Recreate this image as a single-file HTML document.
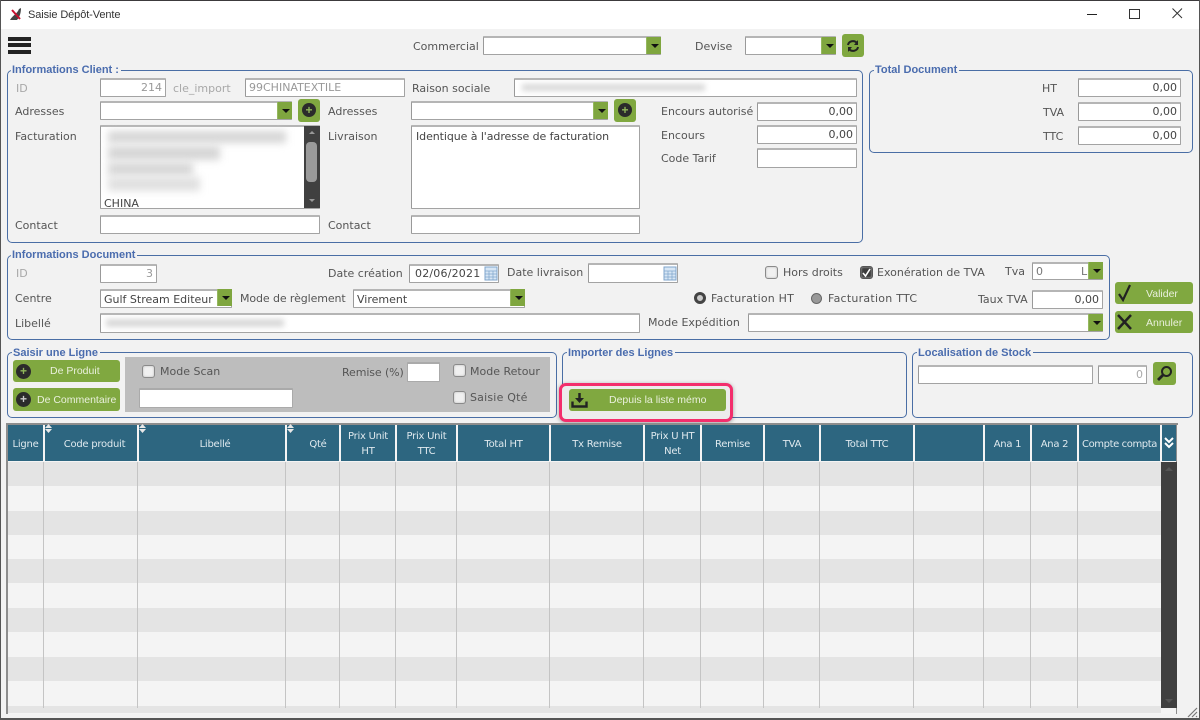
<!DOCTYPE html>
<html><head><meta charset="utf-8"><style>
html,body{margin:0;padding:0;width:1200px;height:720px;overflow:hidden;background:#f2f2f2}
body{position:relative;font-family:"DejaVu Sans","Liberation Sans",sans-serif;font-size:11px;color:#555}
div,svg,span.t{position:absolute;box-sizing:border-box}
.t{white-space:nowrap;line-height:14px;position:absolute}
.l{color:#a8a8a8}
.i{background:#fff;border:1px solid #a3a3a3;border-top:2px solid #b5b5b5;border-left:1px solid #999;border-radius:1px;line-height:16px;padding:0 3px;white-space:nowrap;overflow:hidden;color:#444}
.r{text-align:right;padding-right:3px}
.g{border:1px solid #4a6ea5;border-radius:5px}
.gt{position:absolute;background:#f2f2f2;font-family:"Liberation Sans",sans-serif;font-weight:bold;font-size:11px;color:#4a6cae;line-height:14px;padding:0 2px 0 1px;white-space:nowrap}
.dd{background:#7fa63f;width:15px;border-left:1px solid #95b85f}
.dd:after{content:"";position:absolute;left:4px;top:7px;border:4px solid transparent;border-top:4px solid #111;border-bottom:0}
.b{background:#80a840;border-radius:3px}
.bw{color:#e9f0dc;text-align:center;position:absolute;white-space:nowrap;font-family:"Liberation Sans",sans-serif;font-size:10.5px;line-height:14px}
.c{width:13px;height:13px;background:#f0f0f0;border:1px solid #8a8a8a;border-radius:3px;box-shadow:inset 0 0 2px #bbb}
.h{background:#2d6680;top:425px;height:36px;padding-top:2px;color:#dfe9ee;text-align:center;font-size:10px;letter-spacing:-.25px;line-height:15px;display:flex;align-items:center;justify-content:center}
.sep{top:462px;height:246px;width:1px;background:#c4c4c4}
.rw{left:8px;width:1153px;height:24px;background:#e4e4e4}
.so{width:7px;height:9px;top:424px}
</style></head><body>
<!-- window frame -->
<div style="left:0;top:0;width:1200px;height:1px;background:#3c3a3c"></div>
<div style="left:0;top:1px;width:1200px;height:28px;background:#fff"></div>
<div style="left:0;top:0;width:1px;height:720px;background:#555"></div>
<div style="left:1199px;top:0;width:1px;height:720px;background:#555"></div>
<div style="left:0;top:718px;width:1200px;height:2px;background:#555"></div>
<svg style="left:9px;top:6px" width="14" height="16" viewBox="0 0 14 16"><path d="M1 14 C4 9 8 8 10 3 L12 2 C12 6 11 11 8 14 Z" fill="#444"/><path d="M3 4 L11 13" stroke="#c8102e" stroke-width="2"/></svg>
<span class="t" style="left:28px;top:8px;color:#333;font-family:'Liberation Sans',sans-serif;font-size:11px;letter-spacing:-.1px">Saisie Dépôt-Vente</span>
<div style="left:1087px;top:14px;width:10px;height:1px;background:#222"></div>
<div style="left:1129px;top:9px;width:11px;height:10px;border:1px solid #333"></div>
<svg style="left:1172px;top:8px" width="11" height="11" viewBox="0 0 11 11"><path d="M.5 .5L10 10M10 .5L.5 10" stroke="#333" fill="none"/></svg>

<!-- top bar -->
<div style="left:8px;top:37px;width:23px;height:4px;background:#222"></div>
<div style="left:8px;top:43px;width:23px;height:4px;background:#222"></div>
<div style="left:8px;top:50px;width:23px;height:4px;background:#222"></div>
<span class="t" style="left:413px;top:40px">Commercial</span>
<div class="i" style="left:483px;top:36px;width:178px;height:19px"></div><div class="dd" style="left:646px;top:37px;height:17px"></div>
<span class="t" style="left:695px;top:40px">Devise</span>
<div class="i" style="left:745px;top:36px;width:91px;height:19px"></div><div class="dd" style="left:821px;top:37px;height:17px"></div>
<div class="b" style="left:842px;top:34px;width:22px;height:23px"></div>
<svg style="left:846px;top:39px" width="14" height="14" viewBox="0 0 14 14"><path d="M2 6 A5 4.500 0 0 1 11 4" fill="none" stroke="#222" stroke-width="2"/><path d="M12 1 V6 H8Z" fill="#222"/><path d="M12 8 A5 4.500 0 0 1 3 10" fill="none" stroke="#222" stroke-width="2"/><path d="M2 13 V8 H6Z" fill="#222"/></svg>

<!-- Informations Client -->
<div class="g" style="left:7px;top:70px;width:856px;height:173px"></div>
<span class="gt" style="left:11px;top:63px">Informations Client :</span>
<span class="t l" style="left:16px;top:82px">ID</span>
<div class="i r" style="left:100px;top:78px;width:66px;height:19px;color:#999">214</div>
<span class="t l" style="left:173px;top:82px">cle_import</span>
<div class="i" style="left:245px;top:78px;width:160px;height:19px;color:#999">99CHINATEXTILE</div>
<span class="t" style="left:412px;top:82px">Raison sociale</span>
<div class="i" style="left:514px;top:78px;width:343px;height:19px"></div>
<div style="left:522px;top:84px;width:183px;height:7px;background:#d8d8d8;filter:blur(3px)"></div>

<span class="t" style="left:15px;top:105px">Adresses</span>
<div class="i" style="left:100px;top:101px;width:192px;height:19px"></div><div class="dd" style="left:277px;top:102px;height:17px"></div>
<div class="b" style="left:298px;top:99px;width:22px;height:23px"></div>
<div style="left:302px;top:103px;width:14px;height:14px;border-radius:50%;background:#2b2b2b;color:#8fb75a;font:bold 12px/14px 'Liberation Sans',sans-serif;text-align:center">+</div>
<span class="t" style="left:328px;top:105px">Adresses</span>
<div class="i" style="left:411px;top:101px;width:197px;height:19px"></div><div class="dd" style="left:593px;top:102px;height:17px"></div>
<div class="b" style="left:614px;top:99px;width:22px;height:23px"></div>
<div style="left:618px;top:103px;width:14px;height:14px;border-radius:50%;background:#2b2b2b;color:#8fb75a;font:bold 12px/14px 'Liberation Sans',sans-serif;text-align:center">+</div>

<span class="t" style="left:15px;top:130px">Facturation</span>
<div class="i" style="left:100px;top:125px;width:220px;height:84px"></div>
<div style="left:108px;top:131px;width:178px;height:12px;background:#d6d6d6;filter:blur(4px)"></div>
<div style="left:108px;top:146px;width:112px;height:14px;background:#d6d6d6;filter:blur(4px)"></div>
<div style="left:108px;top:162px;width:85px;height:14px;background:#d8d8d8;filter:blur(4px)"></div>
<div style="left:108px;top:177px;width:92px;height:14px;background:#e0e0e0;filter:blur(4px)"></div>
<span class="t" style="left:104px;top:197px;color:#444;font-size:11px">CHINA</span>
<div style="left:304px;top:126px;width:16px;height:82px;background:#404040"></div>
<div style="left:306px;top:142px;width:11px;height:40px;background:#9a9a9a;border-radius:4px"></div>
<div style="left:309px;top:131px;border:3px solid transparent;border-bottom:3px solid #999;border-top:0"></div>
<div style="left:309px;top:199px;border:3px solid transparent;border-top:3px solid #999;border-bottom:0"></div>
<span class="t" style="left:328px;top:130px">Livraison</span>
<div class="i" style="left:411px;top:125px;width:229px;height:84px;padding-left:4px;line-height:19px;letter-spacing:-.08px">Identique à l'adresse de facturation</div>
<span class="t" style="left:15px;top:219px">Contact</span>
<div class="i" style="left:100px;top:215px;width:220px;height:19px"></div>
<span class="t" style="left:328px;top:219px">Contact</span>
<div class="i" style="left:411px;top:215px;width:229px;height:19px"></div>

<span class="t" style="left:661px;top:105px">Encours autorisé</span>
<div class="i r" style="left:757px;top:102px;width:100px;height:19px">0,00</div>
<span class="t" style="left:661px;top:129px">Encours</span>
<div class="i r" style="left:757px;top:125px;width:100px;height:19px">0,00</div>
<span class="t" style="left:661px;top:152px">Code Tarif</span>
<div class="i" style="left:757px;top:148px;width:100px;height:20px"></div>

<!-- Total -->
<div class="g" style="left:869px;top:70px;width:324px;height:83px"></div>
<span class="gt" style="left:874px;top:63px">Total Document</span>
<span class="t" style="left:1042px;top:82px">HT</span>
<div class="i r" style="left:1078px;top:78px;width:103px;height:19px">0,00</div>
<span class="t" style="left:1043px;top:106px">TVA</span>
<div class="i r" style="left:1078px;top:102px;width:103px;height:19px">0,00</div>
<span class="t" style="left:1043px;top:130px">TTC</span>
<div class="i r" style="left:1078px;top:126px;width:103px;height:19px">0,00</div>

<!-- Informations Document -->
<div class="g" style="left:7px;top:255px;width:1103px;height:85px"></div>
<span class="gt" style="left:11px;top:248px">Informations Document</span>
<span class="t l" style="left:16px;top:267px">ID</span>
<div class="i r" style="left:100px;top:264px;width:57px;height:19px;color:#999">3</div>
<span class="t" style="left:328px;top:267px">Date création</span>
<div class="i" style="left:409px;top:264px;width:90px;height:19px;padding-left:5px;letter-spacing:.2px">02/06/2021</div>
<svg style="left:484px;top:265px" width="14" height="16" viewBox="0 0 14 16"><rect x="1" y="2" width="12" height="13" fill="#d7e6f5" stroke="#7fa5cc"/><path d="M1 6H13M1 9H13M1 12H13M5 6V15M9 6V15" stroke="#7fa5cc" stroke-width=".7"/></svg>
<span class="t" style="left:507px;top:266px">Date livraison</span>
<div class="i" style="left:588px;top:263px;width:90px;height:20px"></div>
<svg style="left:663px;top:265px" width="14" height="16" viewBox="0 0 14 16"><rect x="1" y="2" width="12" height="13" fill="#d7e6f5" stroke="#7fa5cc"/><path d="M1 6H13M1 9H13M1 12H13M5 6V15M9 6V15" stroke="#7fa5cc" stroke-width=".7"/></svg>
<div class="c" style="left:765px;top:266px"></div>
<span class="t" style="left:783px;top:266px">Hors droits</span>
<div class="c" style="left:860px;top:266px;background:#3d3d3d;border-color:#555"></div>
<svg style="left:861px;top:267px" width="11" height="11" viewBox="0 0 11 11"><path d="M2 6L4.500 9L9 2" fill="none" stroke="#fff" stroke-width="1.600"/></svg>
<span class="t" style="left:877px;top:266px">Exonération de TVA</span>
<span class="t" style="left:1005px;top:265px">Tva</span>
<div class="i" style="left:1032px;top:262px;width:71px;height:18px;color:#777;line-height:16px">0<span style="position:absolute;left:48px">L</span></div><div class="dd" style="left:1088px;top:262px;height:17px"></div>

<span class="t" style="left:15px;top:292px">Centre</span>
<div class="i" style="left:100px;top:289px;width:132px;height:19px;padding-top:1px">Gulf Stream Editeur</div><div class="dd" style="left:217px;top:289px;height:17px"></div>
<span class="t" style="left:240px;top:292px;letter-spacing:-.1px">Mode de règlement</span>
<div class="i" style="left:353px;top:289px;width:172px;height:19px;padding-top:1px">Virement</div><div class="dd" style="left:510px;top:289px;height:17px"></div>
<div style="left:694px;top:292px;width:12px;height:12px;border-radius:50%;border:3px solid #444;background:#ccc"></div>
<span class="t" style="left:711px;top:292px;letter-spacing:.2px">Facturation HT</span>
<div style="left:811px;top:293px;width:11px;height:11px;border-radius:50%;border:1px solid #666;background:#999"></div>
<span class="t" style="left:828px;top:292px;letter-spacing:.25px">Facturation TTC</span>
<span class="t" style="left:978px;top:293px">Taux TVA</span>
<div class="i r" style="left:1032px;top:290px;width:71px;height:19px">0,00</div>
<span class="t" style="left:15px;top:317px">Libellé</span>
<div class="i" style="left:100px;top:313px;width:540px;height:20px"></div>
<div style="left:106px;top:319px;width:178px;height:8px;background:#d8d8d8;filter:blur(3px)"></div>
<span class="t" style="left:648px;top:316px">Mode Expédition</span>
<div class="i" style="left:748px;top:313px;width:355px;height:19px"></div><div class="dd" style="left:1088px;top:314px;height:17px"></div>

<div class="b" style="left:1115px;top:282px;width:78px;height:22px"></div>
<svg style="left:1117px;top:284px" width="16" height="18" viewBox="0 0 16 18"><path d="M2 10L6 16L13 1" fill="none" stroke="#222" stroke-width="2.200"/></svg>
<span class="bw" style="left:1146px;top:287px">Valider</span>
<div class="b" style="left:1115px;top:311px;width:78px;height:22px"></div>
<svg style="left:1117px;top:314px" width="16" height="16" viewBox="0 0 16 16"><path d="M1 1L14 15M14 1L1 15" fill="none" stroke="#222" stroke-width="2.500"/></svg>
<span class="bw" style="left:1146px;top:316px">Annuler</span>

<!-- Saisir -->
<div class="g" style="left:7px;top:352px;width:550px;height:66px"></div>
<span class="gt" style="left:12px;top:346px">Saisir une Ligne</span>
<div class="b" style="left:13px;top:360px;width:107px;height:22px"></div>
<div style="left:16px;top:364px;width:15px;height:15px;border-radius:50%;background:#2b2b2b;color:#8fb75a;font:bold 12px/15px 'Liberation Sans',sans-serif;text-align:center">+</div>
<span class="bw" style="left:50px;top:364px">De Produit</span>
<div class="b" style="left:13px;top:388px;width:107px;height:23px"></div>
<div style="left:16px;top:392px;width:15px;height:15px;border-radius:50%;background:#2b2b2b;color:#ccc;font:bold 12px/15px 'Liberation Sans',sans-serif;text-align:center">+</div>
<span class="bw" style="left:37px;top:393px">De Commentaire</span>
<div style="left:125px;top:357px;width:425px;height:55px;background:#bdbdbd"></div>
<div class="c" style="left:142px;top:365px"></div>
<span class="t" style="left:160px;top:365px">Mode Scan</span>
<div class="i" style="left:139px;top:388px;width:154px;height:20px;border-color:#aaa"></div>
<span class="t" style="left:342px;top:366px;letter-spacing:-.1px">Remise (%)</span>
<div class="i" style="left:407px;top:362px;width:33px;height:20px;border-color:#aaa"></div>
<div class="c" style="left:453px;top:364px"></div>
<span class="t" style="left:470px;top:365px">Mode Retour</span>
<div class="c" style="left:453px;top:391px"></div>
<span class="t" style="left:470px;top:391px;letter-spacing:.2px">Saisie Qté</span>

<!-- Importer -->
<div class="g" style="left:562px;top:352px;width:345px;height:66px"></div>
<span class="gt" style="left:567px;top:346px">Importer des Lignes</span>
<div style="left:559px;top:383px;width:174px;height:39px;border:3px solid #f32e6c;border-radius:7px;box-shadow:0 1px 4px rgba(0,0,0,.35);background:#ececec"></div>
<div class="b" style="left:569px;top:389px;width:157px;height:22px"></div>
<svg style="left:571px;top:392px" width="17" height="16" viewBox="0 0 17 16"><path d="M8.500 1V8" stroke="#222" stroke-width="2.500"/><path d="M4 6H13L8.500 11Z" fill="#222"/><path d="M1.500 9.500V14.500H15.500V9.500" fill="none" stroke="#222" stroke-width="2.400"/></svg>
<span class="bw" style="left:609px;top:393px">Depuis la liste mémo</span>

<!-- Localisation -->
<div class="g" style="left:912px;top:352px;width:281px;height:66px"></div>
<span class="gt" style="left:917px;top:346px">Localisation de Stock</span>
<div class="i" style="left:918px;top:365px;width:175px;height:19px"></div>
<div class="i r" style="left:1098px;top:365px;width:49px;height:19px;color:#aaa">0</div>
<div class="b" style="left:1153px;top:362px;width:23px;height:23px"></div>
<svg style="left:1156px;top:365px" width="17" height="17" viewBox="0 0 17 17"><circle cx="10.500" cy="6.500" r="4.500" fill="none" stroke="#222" stroke-width="2"/><path d="M7 10L2 15" stroke="#222" stroke-width="2.800"/></svg>

<!-- table -->
<div style="left:6px;top:423px;width:1172px;height:2px;background:#8d8d8d"></div>
<div style="left:6px;top:423px;width:2px;height:291px;background:#8d8d8d"></div>
<div style="left:1176px;top:423px;width:1px;height:291px;background:#8d8d8d"></div>
<div style="left:8px;top:425px;width:1168px;height:289px;background:#f4f4f4"></div>
<div class="rw" style="top:462px"></div>
<div class="rw" style="top:511px"></div>
<div class="rw" style="top:559px"></div>
<div class="rw" style="top:608px"></div>
<div class="rw" style="top:657px"></div>
<div class="rw" style="top:706px;height:7px"></div>

<div class="h" style="left:8px;width:35px">Ligne</div>
<div class="h" style="left:45px;width:92px;padding-left:7px">Code produit</div>
<div class="h" style="left:139px;width:146px;padding-left:6px">Libellé</div>
<div class="h" style="left:287px;width:52px;padding-left:10px">Qté</div>
<div class="h" style="left:341px;width:54px">Prix Unit<br>HT</div>
<div class="h" style="left:397px;width:59px">Prix Unit<br>TTC</div>
<div class="h" style="left:458px;width:91px">Total HT</div>
<div class="h" style="left:551px;width:92px">Tx Remise</div>
<div class="h" style="left:645px;width:55px">Prix U HT<br>Net</div>
<div class="h" style="left:702px;width:61px">Remise</div>
<div class="h" style="left:765px;width:54px">TVA</div>
<div class="h" style="left:821px;width:92px">Total TTC</div>
<div class="h" style="left:915px;width:68px"></div>
<div class="h" style="left:985px;width:45px">Ana 1</div>
<div class="h" style="left:1032px;width:45px">Ana 2</div>
<div class="h" style="left:1079px;width:81px;white-space:nowrap;letter-spacing:-.4px">Compte compta</div>
<div class="h" style="left:1162px;width:14px"></div>
<svg style="left:1164px;top:437px" width="10" height="12" viewBox="0 0 10 12"><path d="M1 1L5 5L9 1M1 6L5 10L9 6" fill="none" stroke="#fff" stroke-width="2"/></svg>
<svg class="so" style="left:45px" viewBox="0 0 7 9"><path d="M3.500 0L7 4H0ZM3.500 9L0 5H7Z" fill="#e8e8e8"/></svg>
<svg class="so" style="left:139px" viewBox="0 0 7 9"><path d="M3.500 0L7 4H0ZM3.500 9L0 5H7Z" fill="#e8e8e8"/></svg>
<svg class="so" style="left:287px" viewBox="0 0 7 9"><path d="M3.500 0L7 4H0ZM3.500 9L0 5H7Z" fill="#e8e8e8"/></svg>

<div class="sep" style="left:43px"></div>
<div class="sep" style="left:137px"></div>
<div class="sep" style="left:285px"></div>
<div class="sep" style="left:339px"></div>
<div class="sep" style="left:395px"></div>
<div class="sep" style="left:456px"></div>
<div class="sep" style="left:549px"></div>
<div class="sep" style="left:643px"></div>
<div class="sep" style="left:700px"></div>
<div class="sep" style="left:763px"></div>
<div class="sep" style="left:819px"></div>
<div class="sep" style="left:913px"></div>
<div class="sep" style="left:983px"></div>
<div class="sep" style="left:1030px"></div>
<div class="sep" style="left:1077px"></div>

<div style="left:1161px;top:462px;width:16px;height:246px;background:#404040"></div>
<div style="left:1165px;top:467px;border:4px solid transparent;border-bottom:4px solid #555;border-top:0"></div>
<div style="left:1165px;top:699px;border:4px solid transparent;border-top:4px solid #555;border-bottom:0"></div>
<svg style="left:1187px;top:707px" width="11" height="11" viewBox="0 0 11 11"><path d="M1 10L10 1M5 10L10 5M9 10L10 9" stroke="#777" stroke-width="1.200"/></svg>
</body></html>
